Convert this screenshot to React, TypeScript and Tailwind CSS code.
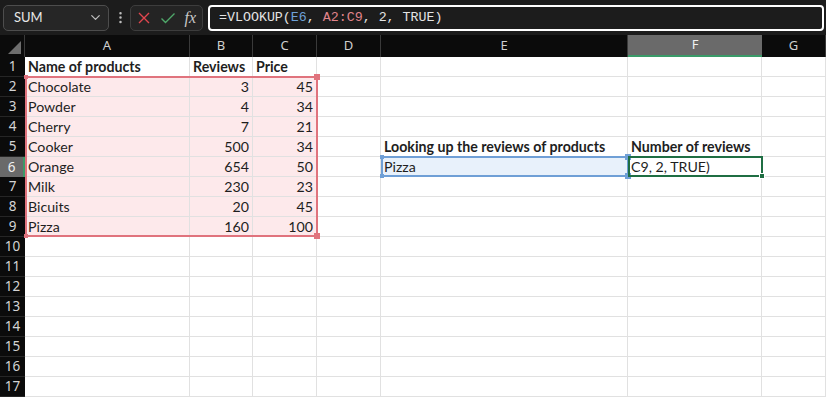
import React from "react";
import { ChevronDown, EllipsisVertical } from "lucide-react";

const cols = ["A", "B", "C", "D", "E", "F", "G"];

type Cell = { v?: string; bold?: boolean; right?: boolean };

const table: Record<number, Cell[]> = {
  1: [{ v: "Name of products", bold: true }, { v: "Reviews", bold: true }, { v: "Price", bold: true }],
  2: [{ v: "Chocolate" }, { v: "3", right: true }, { v: "45", right: true }],
  3: [{ v: "Powder" }, { v: "4", right: true }, { v: "34", right: true }],
  4: [{ v: "Cherry" }, { v: "7", right: true }, { v: "21", right: true }],
  5: [{ v: "Cooker" }, { v: "500", right: true }, { v: "34", right: true }, {}, { v: "Looking up the reviews of products", bold: true }, { v: "Number of reviews", bold: true }],
  6: [{ v: "Orange" }, { v: "654", right: true }, { v: "50", right: true }, {}, { v: "Pizza" }, { v: "C9, 2, TRUE)" }],
  7: [{ v: "Milk" }, { v: "230", right: true }, { v: "23", right: true }],
  8: [{ v: "Bicuits" }, { v: "20", right: true }, { v: "45", right: true }],
  9: [{ v: "Pizza" }, { v: "160", right: true }, { v: "100", right: true }],
};

const rows = Array.from({ length: 17 }, (_, i) => i + 1);

function cellBg(r: number, c: number) {
  if (r >= 2 && r <= 9 && c <= 2) return "bg-[#fde9eb]";
  if (r === 6 && c === 4) return "bg-[#e8f1fb]";
  return "bg-white";
}

function FormulaBar() {
  return (
    <div className="h-[35px] bg-[#1c1c1c] flex items-center pl-[3px]">
      <div className="w-[106px] h-[26px] rounded-[5px] border border-[#4d4d4d] bg-[#262626] flex items-center justify-between pl-[10px] pr-[5px]">
        <span className="text-[13px] text-[#e8e8e8]">SUM</span>
        <ChevronDown size={15} className="text-[#bdbdbd]" />
      </div>
      <EllipsisVertical size={15} className="ml-[4px] text-[#bdbdbd]" />
      <div className="ml-[2px] w-[73px] h-[26px] rounded-[5px] border border-[#3d3d3d] bg-[#242424] flex items-center justify-between px-[6px]">
        <svg width="14" height="14" viewBox="0 0 14 14">
          <path d="M2 2 L12 12 M12 2 L2 12" stroke="#e0464e" strokeWidth="1.4" fill="none" />
        </svg>
        <svg width="16" height="14" viewBox="0 0 16 14">
          <path d="M1.5 7.5 L5.5 11.5 L14.5 2.5" stroke="#4fa86a" strokeWidth="1.4" fill="none" />
        </svg>
        <span className="font-['Liberation_Serif'] italic text-[16px] text-[#c8c8c8] leading-none">fx</span>
      </div>
      <div className="ml-[5px] mr-[2px] flex-1 h-[26px] rounded-[4px] border-2 border-white bg-[#1c1c1c] pl-[9px] font-['Liberation_Mono'] text-[13.3px] leading-[22px] text-[#e4e4e4] whitespace-pre">
        =VLOOKUP(<span className="text-[#6ea1d8]">E6</span>, <span className="text-[#e0848b]">A2:C9</span>, 2, TRUE)
      </div>
    </div>
  );
}

// a coloured range outline with corner handles, drawn over the cells
function RangeBox({ className, color, handles }: { className: string; color: string; handles: boolean }) {
  return (
    <div className={`absolute pointer-events-none border-2 ${className}`} style={{ borderColor: color }}>
      {handles && (
        <>
          <div className="absolute -left-[3px] -top-[3px] w-[4px] h-[4px]" style={{ background: color }} />
          <div className="absolute -right-[4px] -top-[4px] w-[6px] h-[6px]" style={{ background: color }} />
          <div className="absolute -left-[3px] -bottom-[3px] w-[4px] h-[4px]" style={{ background: color }} />
          <div className="absolute -right-[4px] -bottom-[4px] w-[6px] h-[6px]" style={{ background: color }} />
        </>
      )}
      {!handles && (
        <div className="absolute -right-[4px] -bottom-[4px] w-[6px] h-[6px] border border-white" style={{ background: color }} />
      )}
    </div>
  );
}

export default function App() {
  return (
    <div className="w-[826px] h-[397px] overflow-hidden bg-white font-['Lato',sans-serif]">
      <FormulaBar />
      <div className="relative grid grid-cols-[25px_165px_63px_64px_64px_247px_134px_1fr] grid-rows-[22px_repeat(17,20px)]">
        <div className="bg-[#0b0b0b] border-r border-[#3a3a3a] flex items-end justify-end p-[3px]">
          <div className="w-0 h-0 border-l-[13px] border-l-transparent border-b-[13px] border-b-[#6e6e6e]" />
        </div>
        {cols.map((c) => (
          <div
            key={c}
            className={
              c === "F"
                ? "bg-[#6a6a6a] border-b-2 border-[#3a9a68] flex items-center justify-center font-['Noto_Sans'] text-[13px] text-[#f0f0f0]"
                : "bg-[#0b0b0b] border-r border-[#3a3a3a] flex items-center justify-center font-['Noto_Sans'] text-[13px] text-[#cfcfcf]"
            }
          >
            {c}
          </div>
        ))}
        {rows.map((r) => (
          <React.Fragment key={r}>
            <div
              className={
                r === 6
                  ? "bg-[#6a6a6a] border-r-2 border-[#3a9a68] flex items-center justify-center font-['Noto_Sans'] text-[13.5px] text-[#f0f0f0]"
                  : "bg-[#0b0b0b] border-b border-[#262626] flex items-center justify-center font-['Noto_Sans'] text-[13.5px] text-[#d4d4d4]"
              }
            >
              {r}
            </div>
            {cols.map((c, ci) => {
              const cell = table[r]?.[ci];
              return (
                <div
                  key={c}
                  className={`${cellBg(r, ci)} border-r border-b border-[#e1e1e1] flex items-end px-[3px] text-[14.2px] leading-[18px] text-[#1e1e1e] whitespace-nowrap ${
                    cell?.right ? "justify-end" : ""
                  } ${cell?.bold ? "font-bold" : ""}`}
                >
                  {cell?.v}
                </div>
              );
            })}
          </React.Fragment>
        ))}

        <RangeBox className="left-[25px] top-[41px] w-[293px] h-[161px]" color="#e0737d" handles />
        <RangeBox className="left-[381px] top-[121px] w-[248px] h-[21px]" color="#6f9fd6" handles />
        <RangeBox className="left-[628px] top-[121px] w-[135px] h-[21px]" color="#1f6e43" handles={false} />
      </div>
    </div>
  );
}
